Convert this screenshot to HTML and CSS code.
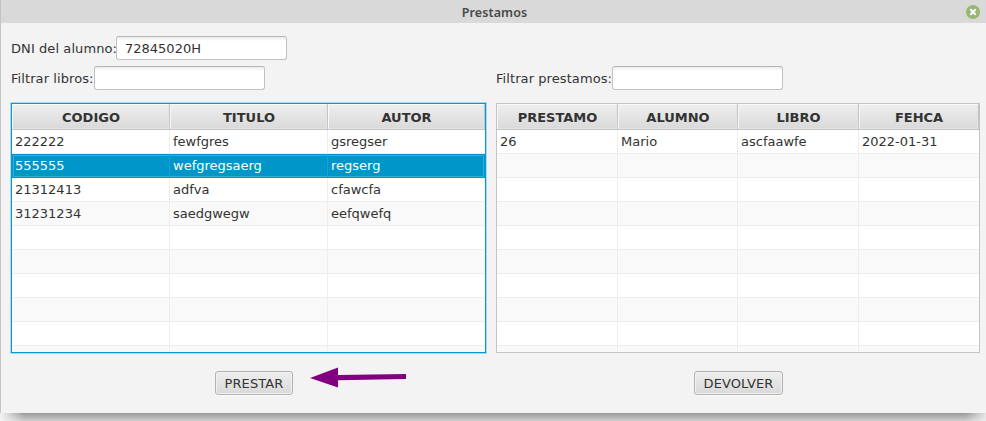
FILE: index.html
```html
<!DOCTYPE html>
<html lang="es">
<head>
<meta charset="utf-8">
<title>Prestamos</title>
<link rel="stylesheet" href="styles.css">
</head>
<body>
<div class="window">
  <header class="titlebar">
    <span class="title">Prestamos</span>
    <svg class="close" width="14" height="14" viewBox="0 0 14 14"><circle cx="7" cy="7" r="7" fill="#96b873"/><path d="M4.3 4.3l5.4 5.4M9.7 4.3l-5.4 5.4" stroke="#fff" stroke-width="2"/></svg>
  </header>
  <main class="content">
    <div class="field"><label class="label-dni" for="dni">DNI del alumno:</label><input id="dni" type="text" value="72845020H"></div>
    <div class="filters">
      <div class="field"><label class="label-books" for="books">Filtrar libros:</label><input id="books" type="text"></div>
      <div class="field"><label class="label-loans" for="loans">Filtrar prestamos:</label><input id="loans" type="text"></div>
    </div>
    <div class="tables">
      <div class="table books focused">
        <div class="row head"><span>CODIGO</span><span>TITULO</span><span>AUTOR</span></div>
        <div class="row"><span>222222</span><span>fewfgres</span><span>gsregser</span></div>
        <div class="row selected"><span>555555</span><span>wefgregsaerg</span><span>regserg</span></div>
        <div class="row"><span>21312413</span><span>adfva</span><span>cfawcfa</span></div>
        <div class="row"><span>31231234</span><span>saedgwegw</span><span>eefqwefq</span></div>
        <div class="row"><span></span><span></span><span></span></div>
        <div class="row"><span></span><span></span><span></span></div>
        <div class="row"><span></span><span></span><span></span></div>
        <div class="row"><span></span><span></span><span></span></div>
        <div class="row"><span></span><span></span><span></span></div>
        <div class="row"><span></span><span></span><span></span></div>
      </div>
      <div class="table loans">
        <div class="row head"><span>PRESTAMO</span><span>ALUMNO</span><span>LIBRO</span><span>FEHCA</span></div>
        <div class="row"><span>26</span><span>Mario</span><span>ascfaawfe</span><span>2022-01-31</span></div>
        <div class="row"><span></span><span></span><span></span><span></span></div>
        <div class="row"><span></span><span></span><span></span><span></span></div>
        <div class="row"><span></span><span></span><span></span><span></span></div>
        <div class="row"><span></span><span></span><span></span><span></span></div>
        <div class="row"><span></span><span></span><span></span><span></span></div>
        <div class="row"><span></span><span></span><span></span><span></span></div>
        <div class="row"><span></span><span></span><span></span><span></span></div>
        <div class="row"><span></span><span></span><span></span><span></span></div>
        <div class="row"><span></span><span></span><span></span><span></span></div>
      </div>
    </div>
    <div class="actions">
      <button class="lend" type="button">PRESTAR</button>
      <svg class="arrow" width="97" height="22" viewBox="0 0 97 22"><path d="M0 12L28 1.5V8.9L96 8V13L28 14.2V21.5Z" fill="#800080"/></svg>
      <button class="return" type="button">DEVOLVER</button>
    </div>
  </main>
</div>
</body>
</html>
```
FILE: styles.css
```css
* { box-sizing: border-box; }

body {
  margin: 0;
  height: 421px;
  overflow: hidden;
  background: linear-gradient(to bottom, #999 413px, #d0d0d0 421px);
  font: 13px "DejaVu Sans", sans-serif;
  color: #333;
}

.window {
  height: 413px;
  background: #f3f3f3;
  border-left: 1px solid #c4c4c4;
}

body::after {
  content: "";
  display: block;
  height: 8px;
  background: linear-gradient(to right, #f4f4f4, rgba(244, 244, 244, 0) 24px, rgba(244, 244, 244, 0) 966px, rgba(244, 244, 244, .8));
}

.titlebar {
  height: 23px;
  padding-right: 6px;
  background: #d9d9d9;
  display: grid;
  grid-template-columns: 20px 1fr 14px;
  align-items: center;
}

.title {
  grid-column: 2;
  padding-left: 2px;
  padding-top: 1px;
  text-align: center;
  font: 600 12.5px/23px "Noto Sans", sans-serif;
  letter-spacing: .1px;
  color: #4a4a4a;
}

.close { display: block; margin-top: -1px; }

.content { padding: 13px 6px 0 10px; }

.field { display: flex; height: 24px; line-height: 26px; white-space: nowrap; }
.field label { letter-spacing: .08px; }
.label-dni { width: 105px; }
.label-books { width: 83px; }
.label-loans { width: 116px; }

input {
  width: 171px;
  height: 24px;
  padding: 2px 8px 0;
  border: 1px solid #c1c1c1;
  border-top-color: #b5b5b5;
  border-radius: 3px;
  background: linear-gradient(#ececec, #fff 4px);
  font: inherit;
  color: #333;
  outline: none;
}

.filters { display: grid; grid-template-columns: 485px 1fr; margin-top: 6px; }

.tables { display: flex; gap: 10px; margin-top: 13px; }

.table {
  height: 250px;
  overflow: hidden;
  border: 1px solid #c4c4c4;
  background: #fff;
}
.books { width: 475px; }
.loans { width: 484px; }
.focused { border-color: #069bd0; box-shadow: 0 0 0 1px #a5d9ec; }

.row { display: grid; height: 24px; line-height: 23px; }
.books .row { grid-template-columns: 158px 158px 157px; }
.loans .row { grid-template-columns: 121px 120px 121px 120px; }
.row span { padding-left: 3px; border-right: 1px solid #ededed; border-bottom: 1px solid #ededed; }
.row span:last-child { border-right: 0; }
.row:nth-child(odd) { background: #f9f9f9; }

.row.head { height: 26px; line-height: 27px; font-weight: bold; text-align: center; }
.head span {
  height: 26px;
  padding: 0 0 0 1px;
  border-color: #c4c4c4;
  background: linear-gradient(#efefef, #d9d9d9);
  box-shadow: inset 1px 1px #f8f8f8, inset -1px -1px #e4e4e4;
}
.row.head span:last-child { border-right: 1px solid #c4c4c4; }

.row.selected {
  background: #0096c9;
  color: #fff;
  box-shadow: inset 0 0 0 1px #0096c9, inset 0 0 0 2px #35abd5;
}
.selected span { border-right-color: #1ba1cf; border-bottom-color: transparent; }

.actions { display: flex; margin-top: 18px; height: 24px; padding-left: 204px; }

button {
  height: 24px;
  padding: 0;
  border: 1px solid #b2b2b2;
  border-radius: 3px;
  background: linear-gradient(#eee, #d9d9d9);
  box-shadow: inset 0 0 0 1px #f0f0f0, 0 1px #fafafa;
  font: inherit;
  letter-spacing: .1px;
  color: #333;
}
.lend { width: 78px; }
.return { width: 89px; margin-left: 287px; }
.arrow { margin: -5px 0 0 17px; }
```
